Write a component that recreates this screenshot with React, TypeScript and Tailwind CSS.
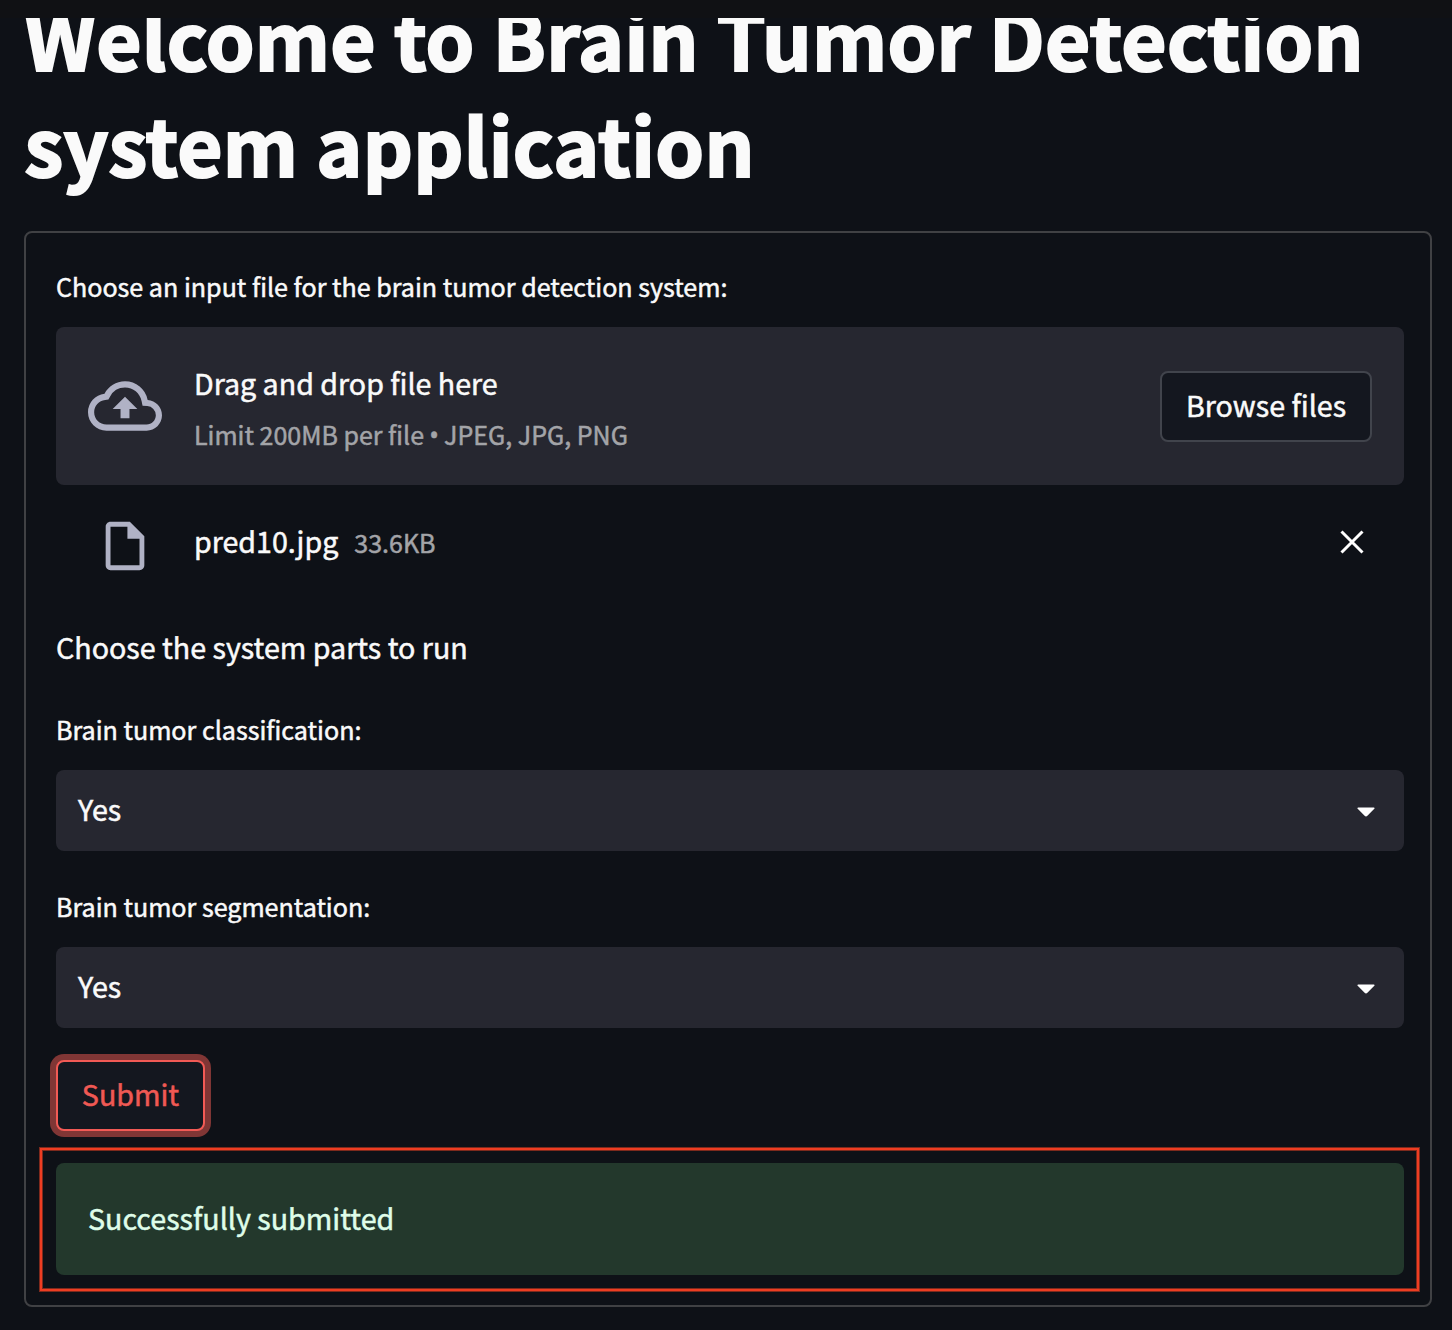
import React from "react";

const font = "font-['Noto_Sans_CJK_SC','Noto_Sans',sans-serif] [-webkit-text-stroke:0.5px_currentColor]";

function SelectField({ label, value }: { label: string; value: string }) {
  return (
    <div className="mt-[35px]">
      <div className="h-[40px] text-[25.08px] leading-[40px]">{label}</div>
      <div className="mt-[21px] flex h-[81px] items-center justify-between rounded-[8px] bg-[#262730] pl-[22px] pr-[29px] text-[28.65px]">
        <span className="-mt-[2px]">{value}</span>
        <svg width="18" height="10" viewBox="0 0 18 10" className="mt-[3px]">
          <path d="M1.2 0.5h15.6c.8 0 1.1.8.5 1.3L10.400 8.800c-.8.8-2 .8-2.800 0L.7 1.800C.1 1.300.4.5 1.200.5Z" fill="#fff" />
        </svg>
      </div>
    </div>
  );
}

export default function App() {
  return (
    <div className={`relative h-[1330px] overflow-hidden bg-[#0e1117] text-[#fafafa] ${font}`}>
      <header className="absolute inset-x-0 top-0 h-[18px] bg-[#101114]" />
      <h1 className="-mt-[15px] pl-[24.5px] text-[78px] font-bold leading-[105.5px] tracking-[0.3px] whitespace-nowrap [-webkit-text-stroke:2.2px_currentColor]">
        Welcome to Brain Tumor Detection<br />system application
      </h1>
      <div className="ml-[24px] mt-[35px] h-[1076px] w-[1408px] rounded-[8px] border-2 border-[#404144] pl-[30px] pt-[33px]">
        <div className="w-[1348px]">
          <div className="h-[40px] text-[25.08px] leading-[40px]">Choose an input file for the brain tumor detection system:</div>
          <div className="mt-[21px] flex h-[158px] items-center rounded-[8px] bg-[#262730] px-[32px]">
            <svg width="74" height="74" viewBox="0 0 24 24" fill="#b0b2c5">
              <path d="M19.350 10.040A7.490 7.490 0 0 0 12 4C9.110 4 6.600 5.640 5.350 8.040A5.994 5.994 0 0 0 0 14c0 3.310 2.690 6 6 6h13c2.760 0 5-2.240 5-5 0-2.640-2.050-4.780-4.650-4.960zM19 18H6c-2.210 0-4-1.790-4-4 0-2.050 1.530-3.760 3.560-3.970l1.070-.11.5-.95A5.469 5.469 0 0 1 12 6c2.620 0 4.880 1.860 5.390 4.430l.3 1.500 1.530.11A2.980 2.980 0 0 1 22 15c0 1.650-1.350 3-3 3zM8 13h2.550v3h2.900v-3H16l-4-4-4 4z" />
            </svg>
            <div className="ml-[32px] mt-[5px] flex-1">
              <div className="h-[51px] text-[28.6px] leading-[50px]">Drag and drop file here</div>
              <div className="h-[51px] text-[25px] leading-[50px] text-[#a3a4a8]">
                Limit 200MB per file<span className="inline-block w-[20px] text-center font-['Open_Sans',sans-serif] text-[27px] leading-none">•</span>JPEG, JPG, PNG
              </div>
            </div>
            <button className="h-[71px] w-[212px] rounded-[8px] border-2 border-[#41444c] bg-[#14171f] pb-[2px] text-[28.65px]">Browse files</button>
          </div>
          <div className="mt-[32px] flex h-[56px] items-center px-[40px]">
            <svg width="58" height="58" viewBox="0 0 24 24" fill="#b0b2c5" className="mt-[1px]">
              <path d="M6 2c-1.100 0-1.990.9-1.990 2L4 20c0 1.100.89 2 1.990 2H18c1.100 0 2-.9 2-2V8l-6-6H6zm0 2h7v5h5v11H6V4z" />
            </svg>
            <span className="-mt-[7px] ml-[40px] text-[28.6px]">pred10.jpg</span>
            <span className="-mt-[4px] ml-[16px] text-[25px] text-[#a3a4a8]">33.6KB</span>
            <svg width="24" height="24" viewBox="0 0 24 24" className="-mt-[6px] ml-auto"><path d="M1.500 1.500l21 21M22.500 1.500l-21 21" stroke="#fff" strokeWidth="3" /></svg>
          </div>
          <div className="mt-[48px] h-[51px] text-[28.65px] leading-[51px]">Choose the system parts to run</div>
          <div className="pt-[2px]">
            <SelectField label="Brain tumor classification:" value="Yes" />
          </div>
          <SelectField label="Brain tumor segmentation:" value="Yes" />
          <button className="mt-[32px] block h-[71px] w-[149px] rounded-[8px] border-2 border-[#f25a55] bg-[#14171f] pb-[2px] text-[28.65px] text-[#f05954] shadow-[0_0_0_6px_#803635]">Submit</button>
          <div className="-ml-[16px] mt-[17px] h-[143px] w-[1379px] border-2 border-[#ee3d22] pl-[14px] pt-[13px] shadow-[0_0_0_1px_#7e2a1d,inset_0_0_0_1px_#7e2a1d]">
            <div className="flex h-[112px] w-[1348px] items-center rounded-[8px] bg-[#23382c] pb-[2px] pl-[32px] text-[28.65px] text-[#dffde9]">Successfully submitted</div>
          </div>
        </div>
      </div>
    </div>
  );
}
